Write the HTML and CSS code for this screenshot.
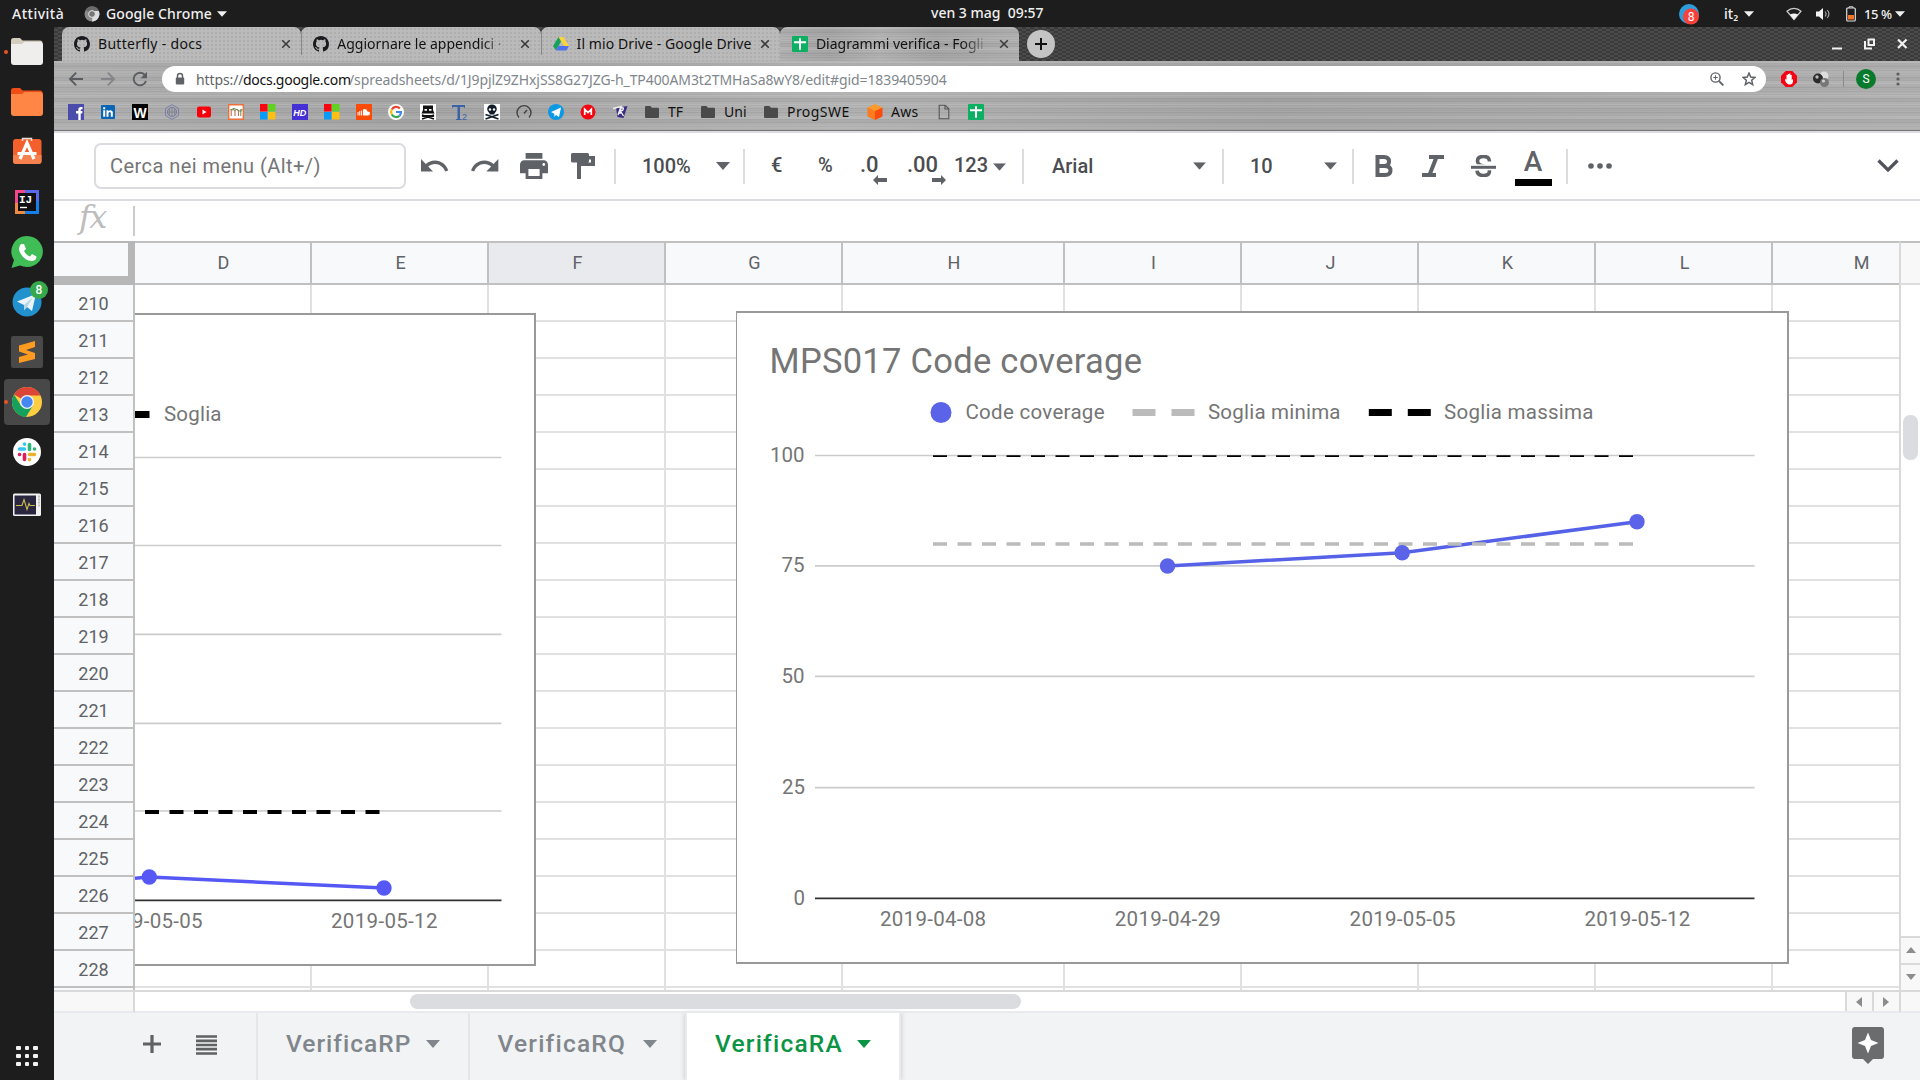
FILE: index.html
```html
<!DOCTYPE html>
<html lang="it">
<head>
<meta charset="utf-8">
<title>Diagrammi verifica - Fogli Google</title>
<link rel="stylesheet" href="styles.css">
</head>
<body>
<svg class="defs" width="0" height="0" aria-hidden="true">
  <defs>
    <symbol id="github" viewBox="0 0 16 16"><path fill="#1b1b1f" d="M8 0C3.58 0 0 3.58 0 8c0 3.54 2.29 6.53 5.47 7.59.4.07.55-.17.55-.38v-1.49c-2.01.37-2.53-.49-2.69-.94-.09-.23-.48-.94-.82-1.13-.28-.15-.68-.52-.01-.53.63-.01 1.08.58 1.23.82.72 1.21 1.87.87 2.33.66.07-.52.28-.87.51-1.07-1.78-.2-3.64-.89-3.64-3.95 0-.87.31-1.59.82-2.15-.08-.2-.36-1.02.08-2.12 0 0 .67-.21 2.2.82a7.6 7.6 0 0 1 4 0c1.53-1.04 2.2-.82 2.2-.82.44 1.1.16 1.92.08 2.12.51.56.82 1.27.82 2.15 0 3.07-1.87 3.75-3.65 3.95.29.25.54.73.54 1.48v2.2c0 .21.15.46.55.38A8 8 0 0 0 16 8c0-4.42-3.58-8-8-8z"/></symbol>
    <symbol id="cross" viewBox="0 0 10 10"><path d="M1.2 1.2l7.6 7.6M8.8 1.2L1.2 8.8" stroke="#3c3c3c" stroke-width="1.6"/></symbol>
    <symbol id="sheets" viewBox="0 0 16 16"><rect width="16" height="16" rx="1" fill="#0db062"/><path d="M2 6.2h12M8 2.2v11.6" stroke="#fff" stroke-width="2"/></symbol>
    <symbol id="folder" viewBox="0 0 16 16"><path fill="#4a4a4a" d="M1 3.4c0-.8.5-1.4 1.3-1.4h4l1.7 1.8h5.7c.8 0 1.3.5 1.3 1.3v7.6c0 .8-.5 1.3-1.3 1.3H2.3C1.500 14 1 13.500 1 12.700z"/></symbol>
    <symbol id="caret" viewBox="0 0 14 8"><path d="M0 0h14L7 8z" fill="currentColor"/></symbol>
    <symbol id="windows" viewBox="0 0 16 16"><path fill="#f8060f" d="M0 0h7.500v7.500H0z"/><path fill="#5fd222" d="M8 0h7.500v7.500H8z"/><path fill="#0a9bf5" d="M0 8h7.500v7.500H0z"/><path fill="#fdbf11" d="M8 8h7.500v7.500H8z"/></symbol>
  </defs>
</svg>

<header class="system-bar">
  <span class="activities">Attività</span>
  <svg class="app-icon" width="16" height="16" viewBox="0 0 16 16"><circle cx="8" cy="8" r="7.500" fill="#8b8b8b"/><path d="M8 8L1.500 4A7.500 7.500 0 0 1 15 5z" fill="#6b6b6b"/><path d="M8 15.500A7.500 7.500 0 0 0 14.800 5H9z" fill="#dedede"/><circle cx="8" cy="8" r="3.400" fill="#777" stroke="#e5e5e5"/></svg>
  <span class="app-name">Google Chrome</span>
  <svg class="sys-caret" width="10" height="6"><use href="#caret"/></svg>
  <span class="clock">ven 3 mag&nbsp; 09:57</span>
  <div class="tray">
    <svg width="22" height="22" viewBox="0 0 22 22"><circle cx="11" cy="11" r="10" fill="#2d9edb"/><circle cx="13" cy="13.500" r="8" fill="#f6423b"/><text x="13" y="18" text-anchor="middle" class="tray-count">8</text></svg>
    <span class="lang">it₂</span>
    <svg class="sys-caret" width="10" height="6"><use href="#caret"/></svg>
    <svg class="wifi" width="16" height="14" viewBox="0 0 16 14"><path d="M1 4.200C5 .3 11 .3 15 4.200L8 12.500z" fill="none" stroke="#ccc" stroke-width="1.200"/><path d="M4 7.500c2.500-1.500 5.500-1.500 8 0L8 12.700z" fill="#f2f2f2"/></svg>
    <svg class="volume" width="16" height="14" viewBox="0 0 16 14"><path d="M1 4.500h3L8 1v12L4 9.500H1z" fill="#f2f2f2"/><path d="M10 4.500c1.300 1.500 1.300 3.500 0 5M12.200 3c2.200 2.500 2.200 5.500 0 8" fill="none" stroke="#aaa" stroke-width="1.100"/></svg>
    <svg class="battery" width="10" height="16" viewBox="0 0 10 16"><path d="M3 2V.8h4V2" fill="none" stroke="#ddd"/><rect x=".7" y="2" width="8.600" height="13" rx="1" fill="none" stroke="#ddd" stroke-width="1.200"/><path d="M2 9h6v4.500H2z" fill="#f37329"/></svg>
    <span class="percent">15 %</span>
    <svg class="sys-caret" width="10" height="6"><use href="#caret"/></svg>
  </div>
</header>

<div class="desktop">
<nav class="dock">
  <div class="dock-item running"><svg width="32" height="32" viewBox="0 0 32 32"><path d="M0 4.500Q0 2 2.500 2H9l2.500 2.500H29Q31.500 4.500 31.500 7v5H0z" fill="#d3cdc0"/><path d="M0 8h11l2.500-2H29q3 0 3 3v17q0 3-3 3H3q-3 0-3-3z" fill="#efeeec"/></svg></div>
  <div class="dock-item"><svg width="32" height="32" viewBox="0 0 32 32"><path d="M0 4.500Q0 2 2.500 2H9l2.500 2.500H29Q31.500 4.500 31.500 7v5H0z" fill="#f04e16"/><path d="M0 8h11l2.500-2H29q3 0 3 3v18q0 3-3 3H3q-3 0-3-3z" fill="#ff8644"/></svg></div>
  <div class="dock-item store"><svg width="32" height="32" viewBox="0 0 32 32"><rect x="2" y="4" width="28.500" height="25" rx="3" fill="#f4602c"/><path d="M2 20h28.500v6q0 3-3 3H5q-3 0-3-3z" fill="#f5824e"/><path d="M11.500 6V3.500h9V6" fill="none" stroke="#eedfd8" stroke-width="1.500"/><path d="M9 24l7-16 7 16M6.500 18.500h19" fill="none" stroke="#fff" stroke-width="3.200"/></svg></div>
  <div class="dock-item"><svg width="32" height="32" viewBox="0 0 32 32"><path d="M4 4h12v24H4z" fill="#f3478a"/><path d="M14 4h14v12H14z" fill="#576bea"/><path d="M4 17h10v11H4z" fill="#ef8a45"/><path d="M14 15h14v13H14z" fill="#1680ea"/><path d="M7 7h18v18H7z" fill="#101014"/><text x="8" y="16.500" class="ij">IJ</text><path d="M9 21.500h7" stroke="#fff" stroke-width="1.400"/></svg></div>
  <div class="dock-item"><svg width="32" height="32" viewBox="0 0 32 32"><path d="M16 0a16 15.500 0 1 1-7 29.500L.5 32l2.500-8A15.500 15.500 0 0 1 16 0z" fill="#40bd56"/><path d="M10 8l3 0 2 5-2 2q2 4 6 5.500l2-2.500 4.500 2.500q0 4-4.500 4.500C14 25 8.500 18 8 13q0-3 2-5z" fill="#fff"/></svg></div>
  <div class="dock-item"><svg width="32" height="32" viewBox="0 0 32 32"><circle cx="16" cy="16" r="14.500" fill="#2491cf"/><path d="M6 15.500L25 8l-4 17-5-4-3 3v-5z" fill="#eaf5fb"/><path d="M13 19l9-8-6 10-3 3z" fill="#b8d5e5"/></svg><span class="dock-badge">8</span></div>
  <div class="dock-item"><svg width="32" height="32" viewBox="0 0 32 32"><rect width="32" height="32" rx="2" fill="#494949"/><path d="M8 9.500L24 5v6l-9 3 9 3v6L8 27v-6l9-2.500-9-3z" fill="#ff9b20"/></svg></div>
  <div class="dock-item active running"><svg width="32" height="32" viewBox="0 0 32 32"><circle cx="16" cy="16" r="15" fill="#ffcd41"/><path d="M16 16L3 8.500A15 15 0 0 1 29.500 9.500H16z" fill="#db4437"/><path d="M3 8.500A15 15 0 0 0 15 31l7-11.500-12 0z" fill="#15a05d"/><circle cx="16" cy="16" r="7" fill="#f3f3f3"/><circle cx="16" cy="16" r="5.700" fill="#4687f4"/></svg></div>
  <div class="dock-item"><svg width="32" height="32" viewBox="0 0 32 32"><circle cx="16" cy="16" r="14" fill="#fff"/><g stroke-width="3.600" stroke-linecap="round" fill="none"><path d="M8.500 13h5M13.500 8v.2" stroke="#36c5f0"/><path d="M18.500 8.500v5M23.500 13h.1" stroke="#2eb67d"/><path d="M18.500 18.500h5M18.500 23.500v.1" stroke="#ecb22e"/><path d="M13.500 18.500v5M8.500 18.500h.1" stroke="#e01e5a"/></g></svg></div>
  <div class="dock-item monitor"><svg width="32" height="32" viewBox="0 0 32 32"><rect x="2" y="4.500" width="28" height="22.500" rx="1.500" fill="#f2f2f2"/><path d="M3.500 6.500h21.500v19H3.500z" fill="#2a2640"/><path d="M5 16.500h6l2-6 3 10 2-6 1 2h5" fill="none" stroke="#c9bd48" stroke-width="1.100"/><path d="M28 6.500v12" stroke="#8d8d8d" stroke-dasharray="2 1"/></svg></div>
  <div class="app-grid"><i></i><i></i><i></i><i></i><i></i><i></i><i></i><i></i><i></i></div>
</nav>

<main class="browser">
  <div class="tab-strip">
    <div class="tab first"><svg width="16" height="16"><use href="#github"/></svg><span class="t1">Butterfly - docs</span><svg class="close" width="10" height="10"><use href="#cross"/></svg></div>
    <div class="tab"><svg width="16" height="16"><use href="#github"/></svg><span class="t2 fade">Aggiornare le appendici ·</span><svg class="close" width="10" height="10"><use href="#cross"/></svg></div>
    <div class="tab"><svg width="16" height="16" viewBox="0 0 16 16"><path d="M5.500 1h5L16 10h-5z" fill="#fdd33b"/><path d="M5.500 1L8 5.500 3 14.500 0 10z" fill="#17a15f"/><path d="M5.500 10H16l-2.700 4.500H3z" fill="#5070ee"/></svg><span class="t3">Il mio Drive - Google Drive</span><svg class="close" width="10" height="10"><use href="#cross"/></svg></div>
    <div class="tab current"><svg width="16" height="16"><use href="#sheets"/></svg><span class="t4 fade">Diagrammi verifica - Fogli</span><svg class="close" width="10" height="10"><use href="#cross"/></svg></div>
    <button class="new-tab" aria-label="Nuova scheda"></button>
    <svg class="window-controls" width="76" height="12" viewBox="0 0 76 12"><path d="M0 10.500h10" stroke="#f2f2f2" stroke-width="2"/><path d="M36.500 1.500h5.500v5.500h-5.500z" fill="none" stroke="#f2f2f2" stroke-width="2"/><path d="M33 3v7.500h7" fill="none" stroke="#f2f2f2" stroke-width="2"/><path d="M66 1.500l8.500 8.500M74.500 1.500L66 10" stroke="#f2f2f2" stroke-width="2.200"/></svg>
  </div>

  <div class="metal">
    <div class="nav-bar">
      <svg class="nav-icon" width="16" height="16" viewBox="0 0 16 16"><path d="M15 8H2M8.200 1.700L2 8l6.200 6.300" fill="none" stroke="#5a5c61" stroke-width="1.900"/></svg>
      <svg class="nav-icon" width="16" height="16" viewBox="0 0 16 16"><path d="M1 8h13M7.800 1.700L14 8l-6.200 6.300" fill="none" stroke="#858589" stroke-width="1.900"/></svg>
      <svg class="nav-icon" width="16" height="16" viewBox="0 0 16 16"><path d="M13 4.200A6.300 6.300 0 1 0 14 10" fill="none" stroke="#5a5c61" stroke-width="1.900"/><path d="M15 .8v6.400H8.600z" fill="#5a5c61"/></svg>
      <div class="omnibox">
        <svg class="lock" width="10" height="14" viewBox="0 0 10 14"><path d="M2.500 6V4a2.500 2.500 0 0 1 5 0v2" fill="none" stroke="#5f6368" stroke-width="1.500"/><rect x=".8" y="5.500" width="8.400" height="7" rx="1" fill="#5f6368"/></svg>
        <span class="url"><span class="scheme">https://</span><span class="host">docs.google.com</span><span class="path">/spreadsheets/d/1J9pjlZ9ZHxjSS8G27JZG-h_TP400AM3t2TMHaSa8wY8/edit#gid=1839405904</span></span>
        <svg class="zoom" width="14" height="14" viewBox="0 0 14 14"><circle cx="5.500" cy="5.500" r="4.600" fill="none" stroke="#5f6368" stroke-width="1.400"/><path d="M3.300 5.500h4.400M5.500 3.300v4.400" stroke="#5f6368"/><path d="M8.800 8.800l4.600 4.600" stroke="#5f6368" stroke-width="1.900"/></svg>
        <svg class="star" width="14" height="14" viewBox="0 0 14 14"><path d="M7 1l1.700 4 4.300.4-3.300 2.900 1 4.300L7 10.300l-3.700 2.300 1-4.300L1 5.400 5.300 5z" fill="none" stroke="#5f6368" stroke-width="1.500"/></svg>
      </div>
      <svg class="ext1" width="16" height="16" viewBox="0 0 16 16"><path d="M4.700 0h6.600L16 4.700v6.600L11.300 16H4.700L0 11.300V4.700z" fill="#f50514"/><path d="M4.200 7.500l1.300 1.200V4h1.300V3h1.300V2.500h1.300V4h1.300v5l1.300-1v3q-.5 2.500-3 2.500H7.500Q5.500 13 4.200 10z" fill="#fff"/></svg>
      <svg class="ext2" width="16" height="16" viewBox="0 0 16 16"><circle cx="11" cy="5" r="4.500" fill="#ddd"/><circle cx="5" cy="7.500" r="5" fill="#2b2b2b"/><circle cx="11.500" cy="11.500" r="4.500" fill="#777"/><circle cx="4" cy="6" r="1.700" fill="#b9b9b9"/><circle cx="10.500" cy="10" r="1.600" fill="#d0d0d0"/></svg>
      <i class="nav-sep"></i>
      <span class="avatar">S</span>
      <svg class="kebab" width="4" height="14" viewBox="0 0 4 14"><g fill="#5a5c61"><circle cx="2" cy="2" r="1.600"/><circle cx="2" cy="7" r="1.600"/><circle cx="2" cy="12" r="1.600"/></g></svg>
    </div>
    <div class="bookmarks">
      <svg viewBox="0 0 16 16"><path fill="#4a4bab" d="M0 0h16v16H0z"/><path d="M10.300 16V9.500H8V7h2.300V5.500Q10.300 3 13 3h1.500v2.200H13.500q-.8 0-.8.800v1h1.800l-.3 2.500h-1.500V16z" fill="#fff"/></svg>
      <svg viewBox="0 0 16 16"><rect x="1" y="1" width="14" height="14" rx="1" fill="#0a66b4"/><path d="M3.200 6.300h2v6.500h-2zM3.200 3.200h2v2h-2zM6.500 6.300h1.900v1q2.500-2.400 4.400.5v5h-2V9q-1-2-2.300 0v3.800h-2z" fill="#fff"/></svg>
      <svg viewBox="0 0 16 16"><path d="M0 0h16v16H0z"/><text x="8" y="13.500" text-anchor="middle" class="bm-w">W</text></svg>
      <svg viewBox="0 0 16 16"><path d="M8 .7l6.500 3.700v7.200L8 15.300l-6.500-3.700V4.400z" fill="none" stroke="#7a7fae"/><circle cx="8" cy="8" r="4.500" fill="none" stroke="#777b96"/><path d="M8 3v10M5.500 5v6M10.500 5v6M3.500 8h9" stroke="#777b96" stroke-width=".7"/></svg>
      <svg viewBox="0 0 16 16"><rect x="1" y="2.500" width="14" height="11" rx="2" fill="#f80009"/><path d="M6.500 5.500v5L10.500 8z" fill="#fff"/></svg>
      <svg viewBox="0 0 16 16"><path d="M.7.700h14.600v14.600H.700z" fill="#fff" stroke="#ed6f3b" stroke-width="1.400"/><path d="M3.200 12V7Q5.500 4 7 7v5M7 7q2-3 3.500 0v5" fill="none" stroke="#b9714f" stroke-width="1.100"/><path d="M2 6q4-3 8 0t4-1M12.800 5v7" fill="none" stroke="#5d8c54"/></svg>
      <svg viewBox="0 0 16 16"><use href="#windows"/></svg>
      <svg viewBox="0 0 16 16"><path fill="#4530d5" d="M0 0h16v16H0z"/><text x="7.800" y="11.500" text-anchor="middle" class="bm-hd">HD</text></svg>
      <svg viewBox="0 0 16 16"><use href="#windows"/></svg>
      <svg viewBox="0 0 16 16"><path fill="#fa4b08" d="M0 0h16v16H0z"/><path d="M2 8v3.500M3.800 7v4.500M5.600 6.500v5" stroke="#fff"/><path d="M7 5.500q3.500-1.500 4.500 2 2.500-.2 2.500 2 0 2-2 2H7z" fill="#fff"/></svg>
      <svg viewBox="0 0 16 16"><circle cx="8" cy="8" r="8" fill="#fff"/><g fill="none" stroke-width="2.200"><path d="M11.800 4.400A5 5 0 0 0 3.800 5.500" stroke="#ea4335"/><path d="M3.800 5.500a5 5 0 0 0 0 5" stroke="#fbbc05"/><path d="M3.800 10.500a5 5 0 0 0 7.800 1.200" stroke="#34a853"/><path d="M11.600 11.700A5 5 0 0 0 13 8H8" stroke="#4285f4"/></g></svg>
      <svg viewBox="0 0 16 16"><path fill="#fff" d="M0 0h16v16H0z"/><path d="M3 1.500h10V6l1.500 3.500h-13L3 6z" fill="#111"/><path d="M2 11l12 4M14 11L2 15" stroke="#111" stroke-width="1.500"/><path d="M2 12h12" stroke="#111" stroke-width="2"/><path d="M4.500 5h2.500v1.800H4.500zM9 5h2.500v1.800H9z" fill="#fff"/></svg>
      <svg viewBox="0 0 16 16"><path d="M0 1h13v3.500l-1-1.500H8v12h1.500v1h-5.500v-1H5.500V3H1L0 4.500z" fill="#3a62a5"/><text x="10" y="16" class="bm-t2">2</text></svg>
      <svg viewBox="0 0 16 16"><path fill="#fff" d="M0 0h16v16H0z"/><ellipse cx="8" cy="5" rx="4.800" ry="4.500" fill="#111c28"/><path d="M5.500 7h5v3.500h-5z" fill="#111c28"/><path d="M1.500 10.500l13 4.500M14.500 10.500l-13 4.500" stroke="#111c28" stroke-width="1.500"/><circle cx="6" cy="5.500" r="1.200" fill="#fff"/><circle cx="10" cy="5.500" r="1.200" fill="#fff"/></svg>
      <svg viewBox="0 0 16 16"><path d="M3 13.500A7 7 0 1 1 13 13.500" fill="none" stroke="#424242" stroke-width="1.400"/><path d="M8 9.500l3-3.500" stroke="#424242" stroke-width="1.500"/></svg>
      <svg viewBox="0 0 16 16"><circle cx="8" cy="8" r="8" fill="#0b98e4"/><path d="M3 8l10-4.500-2 9.500-3-2-1.700 1.700v-3z" fill="#fff"/></svg>
      <svg viewBox="0 0 16 16"><circle cx="8" cy="8" r="7.500" fill="#f2060f"/><path d="M4.700 11V5.300L8 8.500l3.300-3.200V11" fill="none" stroke="#fff" stroke-width="1.700"/></svg>
      <svg viewBox="0 0 16 16"><path d="M4 4l11.500-2-4 12-6-1z" fill="#3b2b83"/><path d="M1 4.500l8-2L6 11M8 10l1-6q4-1 1.500 2.500L8.500 7l3 5" fill="none" stroke="#eee" stroke-width="1.400"/></svg>
      <span class="bookmark tf"><svg viewBox="0 0 16 16"><use href="#folder"/></svg>TF</span>
      <span class="bookmark uni"><svg viewBox="0 0 16 16"><use href="#folder"/></svg>Uni</span>
      <span class="bookmark prog"><svg viewBox="0 0 16 16"><use href="#folder"/></svg>ProgSWE</span>
      <span class="bookmark aws"><svg viewBox="0 0 16 16"><path d="M8 0l7.500 3.500L8 8 .5 3.500z" fill="#fb9a2c"/><path d="M.5 3.500L8 7v9L.5 12.500z" fill="#fb7b1e"/><path d="M15.500 3.500L8 7v9l7.500-3.500z" fill="#fb4b0d"/></svg>Aws</span>
      <svg viewBox="0 0 16 16"><path d="M3.200 1.200h6l3.600 3.600v10H3.200zM9 1.200V5h3.800" fill="none" stroke="#555" stroke-width="1.100"/></svg>
      <svg viewBox="0 0 16 16"><use href="#sheets"/></svg>
    </div>
  </div>

  <div class="toolbar">
    <div class="search">Cerca nei menu (Alt+/)</div>
    <div class="tools history">
      <svg width="28" height="14" viewBox="2 7 21 10" preserveAspectRatio="none"><path fill="#5f6368" d="M12.500 8c-2.650 0-5.050.99-6.900 2.600L2 7v9h9l-3.620-3.620c1.390-1.160 3.160-1.880 5.120-1.880 3.540 0 6.550 2.310 7.600 5.500l2.370-.78C21.080 11.030 17.150 8 12.500 8z"/></svg>
      <svg width="28" height="14" viewBox="1.500 7 21 10" preserveAspectRatio="none"><path fill="#5f6368" d="M18.400 10.600C16.550 8.990 14.150 8 11.500 8c-4.650 0-8.580 3.030-9.960 7.220L3.900 16c1.050-3.190 4.050-5.500 7.600-5.500 1.950 0 3.730.72 5.120 1.880L13 16h9V7l-3.600 3.600z"/></svg>
      <svg class="print" width="28" height="26" viewBox="2 3 20 18" preserveAspectRatio="none"><path fill="#5f6368" d="M19 8H5c-1.660 0-3 1.340-3 3v6h4v4h12v-4h4v-6c0-1.660-1.340-3-3-3zm-3 11H8v-5h8v5zm3-7c-.55 0-1-.45-1-1s.45-1 1-1 1 .45 1 1-.45 1-1 1zm-1-9H6v4h12V3z"/></svg>
      <svg width="24" height="26" viewBox="0 0 24 26"><path fill="#5f6368" d="M1.500 0h15q1.500 0 1.500 1.500V3h6v10H10v13H6V9.500h14V6.500H18V8q0 1.500-1.500 1.500h-15Q0 9.500 0 8V1.500Q0 0 1.500 0z"/></svg>
    </div>
    <div class="tools zoom-level"><span>100%</span><svg class="drop" width="14" height="8"><use href="#caret"/></svg></div>
    <div class="tools number">
      <span class="eur">€</span><span class="pct">%</span>
      <span class="dec dec1">.0<svg width="14" height="10" viewBox="0 0 14 10"><path d="M0 5l5-5v3h9v4H5v3z" fill="#5f6368"/></svg></span>
      <span class="dec dec2">.00<svg width="14" height="10" viewBox="0 0 14 10"><path d="M14 5L9 0v3H0v4h9v3z" fill="#5f6368"/></svg></span>
      <span class="fmt">123</span><svg class="drop" width="13" height="8" viewBox="0 0 14 8"><use href="#caret"/></svg>
    </div>
    <div class="tools family"><span>Arial</span><svg class="drop" width="13" height="8" viewBox="0 0 14 8"><use href="#caret"/></svg></div>
    <div class="tools size"><span>10</span><svg class="drop" width="13" height="8" viewBox="0 0 14 8"><use href="#caret"/></svg></div>
    <div class="tools style">
      <svg width="18" height="22" viewBox="0 0 18 22"><path d="M2.500 2h6.500q5 0 5 4.500T9 11H2.500zM2.500 11H10q5.500 0 5.500 4.500T10 20H2.500z" fill="none" stroke="#5f6368" stroke-width="4"/></svg>
      <svg width="22" height="22" viewBox="0 0 22 22"><path d="M7 2h15M0 20h14M14.500 2L7.500 20" fill="none" stroke="#5f6368" stroke-width="4"/></svg>
      <svg width="25" height="22" viewBox="0 0 25 22"><path d="M18.500 6.500q0-5-6-5t-6 4.500q0 4 6 5t6 5q0 4.500-6 4.500t-6.500-5" fill="none" stroke="#5f6368" stroke-width="3.600"/><path d="M0 9.300h25v6H0z" fill="#fff"/><path d="M0 12.300h25" stroke="#5f6368" stroke-width="3"/></svg>
      <span class="text-color">A</span>
    </div>
    <div class="tools more">
      <svg width="24" height="8" viewBox="0 0 24 8"><g fill="#5f6368"><circle cx="3" cy="4" r="2.800"/><circle cx="12" cy="4" r="2.800"/><circle cx="21" cy="4" r="2.800"/></g></svg>
      <svg width="22" height="14" viewBox="0 0 22 14"><path d="M1.500 1.500L11 11l9.500-9.500" fill="none" stroke="#50545a" stroke-width="3.200"/></svg>
    </div>
  </div>

  <div class="formula"><span class="fx">fx</span><i></i></div>

  <div class="sheet">
    <div class="corner"></div>
    <div class="col-heads"><span>D</span><span>E</span><span class="selected">F</span><span>G</span><span class="wide">H</span><span>I</span><span>J</span><span>K</span><span>L</span><span>M</span></div>
    <div class="scroll-head"></div>
    <div class="row-heads"><span>210</span><span>211</span><span>212</span><span>213</span><span>214</span><span>215</span><span>216</span><span>217</span><span>218</span><span>219</span><span>220</span><span>221</span><span>222</span><span>223</span><span>224</span><span>225</span><span>226</span><span>227</span><span>228</span></div>
    <div class="cells">
      <div class="col-lines"><i></i><i></i><i></i><i></i><i class="wide"></i><i></i><i></i><i></i><i></i></div>
      <div class="chart chart-left">
        <svg width="399" height="649" viewBox="135 315 399 649">
          <g stroke="#ccc" stroke-width="1.700"><path d="M135 457.500h366.500M135 545.500h366.500M135 634.300h366.500M135 723.300h366.500M135 811h366.500"/></g>
          <path d="M135 900.300h366.500" stroke="#333" stroke-width="1.800"/>
          <path d="M135 414.500h14.500" stroke="#000" stroke-width="7"/>
          <path d="M145 812h236" stroke="#000" stroke-width="4" stroke-dasharray="14 10.500"/>
          <path d="M135 878.300L149.300 877 384 888" fill="none" stroke="#5558f5" stroke-width="3.500"/>
          <g fill="#5558f5"><circle cx="149.300" cy="877" r="7.700"/><circle cx="384" cy="888" r="7.700"/></g>
          <g class="chart-text"><text x="164" y="421" textLength="57.500">Soglia</text><text x="96.500" y="927.500" textLength="106">2019-05-05</text><text x="331" y="927.500" textLength="106.500">2019-05-12</text></g>
        </svg>
      </div>
      <div class="chart chart-right">
        <svg width="1050" height="649" viewBox="737 313 1050 649">
          <text class="chart-title" x="769.500" y="372.700" textLength="372.500">MPS017 Code coverage</text>
          <circle cx="941" cy="412.500" r="10.500" fill="#5b63e8"/>
          <path d="M1132.500 412.500h62.500" stroke="#bbb" stroke-width="7" stroke-dasharray="23 16"/>
          <path d="M1368.800 412.500h62" stroke="#000" stroke-width="7" stroke-dasharray="23 16"/>
          <g stroke="#ccc" stroke-width="1.700"><path d="M815 455.500h939.500M815 565.800h939.500M815 676.300h939.500M815 787.700h939.500"/></g>
          <path d="M815 898.300h939.500" stroke="#333" stroke-width="1.800"/>
          <path d="M1167.500 566L1402.200 552.700 1637 521.700" fill="none" stroke="#5562e8" stroke-width="3.500"/>
          <path d="M933 544h702" stroke="#bbb" stroke-width="3.600" stroke-dasharray="14 10.500"/>
          <path d="M933 456.200h702" stroke="#000" stroke-width="1.700" stroke-dasharray="14 10.500"/>
          <g fill="#5b63e8"><circle cx="1167.500" cy="566" r="7.700"/><circle cx="1402.200" cy="552.700" r="7.700"/><circle cx="1637" cy="521.700" r="7.700"/></g>
          <g class="chart-text">
            <text x="965.500" y="419" textLength="139">Code coverage</text><text x="1208" y="419" textLength="132.500">Soglia minima</text><text x="1444" y="419" textLength="149.500">Soglia massima</text>
            <g text-anchor="end"><text x="804.500" y="462">100</text><text x="804.500" y="572">75</text><text x="804.500" y="682.500">50</text><text x="805" y="794">25</text><text x="805" y="905">0</text></g>
            <text x="880" y="925.700" textLength="106">2019-04-08</text><text x="1114.800" y="925.700" textLength="106">2019-04-29</text><text x="1349.600" y="925.700" textLength="106">2019-05-05</text><text x="1584.400" y="925.700" textLength="106">2019-05-12</text>
          </g>
        </svg>
      </div>
    </div>
    <div class="v-scroll"><i class="thumb"></i><span><b class="up"></b></span><span><b class="down"></b></span></div>
    <div class="h-start"></div>
    <div class="h-scroll"><i class="thumb"></i><span><b class="left"></b></span><span><b class="right"></b></span></div>
    <div class="h-end"></div>
  </div>

  <footer class="sheet-tabs">
    <div class="sheet-menu">
      <svg width="18" height="18" viewBox="0 0 18 18"><path d="M0 9h18M9 0v18" stroke="#616161" stroke-width="3.200"/></svg>
      <svg width="21" height="20" viewBox="0 0 21 20"><path d="M0 1.500h21M0 5.800h21M0 10h21M0 14.200h21M0 18.500h21" stroke="#616161" stroke-width="2.700"/></svg>
    </div>
    <div class="sheet-tab rp"><span>VerificaRP</span><svg width="14" height="8"><use href="#caret"/></svg></div>
    <div class="sheet-tab rq"><span>VerificaRQ</span><svg width="14" height="8"><use href="#caret"/></svg></div>
    <div class="sheet-tab ra"><span>VerificaRA</span><svg width="14" height="8"><use href="#caret"/></svg></div>
    <svg class="explore" width="32" height="37" viewBox="0 0 32 37"><path d="M3 0h26q3 0 3 3v26q0 3-3 3h-8l-5 5-5-5H3q-3 0-3-3V3q0-3 3-3z" fill="#6b6c6e"/><path d="M16 5.500l3 7.500 7.500 3-7.500 3-3 7.500-3-7.500-7.500-3 7.500-3z" fill="#fff"/></svg>
  </footer>
</main>
</div>
</body>
</html>
```

FILE: styles.css
```css
* { box-sizing: border-box; }
body { margin: 0; width: 1920px; height: 1080px; overflow: hidden; font-family: "Roboto", "Liberation Sans", sans-serif; background: #fff; }
svg { display: block; flex: none; }
.defs { position: absolute; }
span { white-space: nowrap; }

/* System bar */
.system-bar { position: relative; height: 27px; background: #1d1d1d; color: #f0f0f0; display: flex; align-items: center; padding-left: 12px; font: 500 14px/26px "Noto Sans", sans-serif; }
.activities { width: 72px; letter-spacing: .5px; }
.app-icon { margin-right: 6px; }
.app-name { width: 105px; margin-right: 6px; letter-spacing: .1px; }
.sys-caret { color: #f0f0f0; }
.clock { position: absolute; left: 931px; top: 0; }
.tray { margin-left: auto; display: flex; align-items: center; padding-right: 15px; }
.tray-count { font: 12px "Roboto", sans-serif; fill: #fff; }
.lang { width: 19px; margin-left: 24px; }
.wifi { margin-left: 32px; }
.volume { margin-left: 13px; }
.battery { margin-left: 15px; }
.percent { width: 31px; margin-left: 8px; font-size: 13px; letter-spacing: -.4px; }
.tray .lang { margin-right: 1px; }

/* Dock */
.desktop { display: flex; height: 1053px; }
.dock { width: 54px; background: #1d1d1d; display: flex; flex-direction: column; }
.dock-item { position: relative; height: 50px; display: flex; align-items: center; justify-content: center; margin: 0 4px; }
.dock-item.active { height: 46px; margin: 2px 4px; background: #484848; border-radius: 4px; }
.dock-item.running::before { content: ""; position: absolute; left: 0; top: 50%; width: 4px; height: 4px; margin-top: -2px; border-radius: 2px; background: #e95420; }
.dock-item.store { padding-bottom: 2px; }
.dock-item.monitor { padding-top: 5px; }
.dock-badge { position: absolute; left: 26px; top: 4px; width: 18px; height: 18px; border-radius: 9px; background: #36a94c; color: #fff; font: 500 12px/18px "Roboto", sans-serif; text-align: center; }
.ij { font: bold 11px "Liberation Mono", monospace; fill: #fff; }
.app-grid { margin-top: auto; margin-bottom: 14px; align-self: center; display: grid; grid-template-columns: repeat(3, 5px); gap: 3.500px; }
.app-grid i { width: 4.500px; height: 4.500px; border-radius: 1px; background: #f2f2f2; }

/* Browser chrome */
.browser { width: 1866px; display: flex; flex-direction: column; }
.tab-strip { height: 34px; display: flex; padding-left: 8px; background-color: #414141; background-image: conic-gradient(#4b4b4b 25%, #3a3a3a 0 50%, #4b4b4b 0 75%, #3a3a3a 0); background-size: 8px 4px; }
.tab { position: relative; width: 239.300px; display: flex; align-items: center; padding-left: 12px; border-radius: 7px 7px 0 0; background-color: #bababa; background-image: radial-gradient(#aeaeae .7px, transparent 1px); background-size: 4px 4px; font: 14px/34px "Noto Sans", sans-serif; color: #111; }
.tab + .tab::before { content: ""; position: absolute; left: 0; top: 6px; width: 1px; height: 22px; background: #888; }
.tab.current::before { display: none; }
.tab span { margin-left: 8px; width: 179px; }
.tab .t1 { letter-spacing: .3px; }
.tab .t3 { letter-spacing: .08px; }
.tab .close { margin-left: 4px; }
.tab .fade { -webkit-mask-image: linear-gradient(90deg, #000 145px, transparent 174px); mask-image: linear-gradient(90deg, #000 145px, transparent 174px); }
.tab.current, .metal { background-color: #ababab; background-image: repeating-linear-gradient(180deg, #fff0 0 1px, #ffffff12 1px 2px, #0000000a 2px 3px, #fff0 3px 5px, #0000000a 5px 6px, #ffffff0d 6px 7px), repeating-linear-gradient(180deg, #ffffff10 0 2px, #00000008 4px 7px, #ffffff10 11px), linear-gradient(90deg, #ffffff0d, #0000000a 20%, #ffffff14 42%, #0000000a 65%, #ffffff0d); background-size: auto; }
.new-tab { position: relative; width: 28px; height: 28px; margin: 3px 0 0 7.500px; border: 0; padding: 0; border-radius: 14px; background: linear-gradient(#111, #111) center/12px 2px no-repeat, linear-gradient(#111, #111) center/2px 12px no-repeat, #c4c4c4; }
.window-controls { margin: 11px 12px 0 auto; }
.metal { height: 70px; border-bottom: 1px solid #777; }
.nav-bar { height: 35px; display: flex; align-items: center; padding-left: 14px; }
.nav-icon { margin-right: 16px; }
.omnibox { width: 1604px; height: 26px; margin-left: -2px; margin-top: 1px; border-radius: 13px; background: #fff; display: flex; align-items: center; padding: 0 10px 0 13px; }
.url { margin-left: 11px; margin-right: auto; font: 14px/25px "Noto Sans", sans-serif; color: #80868b; display: flex; }
.scheme { color: #5f6368; width: 47px; letter-spacing: -.1px; }
.host { color: #111; width: 106px; letter-spacing: -.28px; }
.path { letter-spacing: -.09px; }
.zoom { margin-right: 18px; }
.ext1 { margin-left: 15px; }
.ext2 { margin-left: 16px; }
.nav-sep { width: 1px; height: 16px; background: #8a8a8a; margin: 0 12px 0 14px; }
.avatar { width: 20px; height: 20px; border-radius: 10px; background: #087a2b; color: #fff; font: 12px/20px "Roboto", sans-serif; text-align: center; }
.kebab { margin-left: 20px; }
.bookmarks { display: flex; align-items: center; gap: 16px; padding-left: 14px; height: 31px; font: 14px/20px "Noto Sans", sans-serif; color: #111; }
.bookmarks svg { width: 16px; height: 16px; }
.bookmark { display: flex; align-items: center; gap: 8px; }
.tf { width: 40px; }
.uni { width: 47px; }
.prog { width: 88px; letter-spacing: .45px; }
.aws { width: 53px; letter-spacing: .3px; }
.bm-w { font: bold 14px "Liberation Sans", sans-serif; fill: #fff; }
.bm-hd { font: italic bold 9px "Liberation Sans", sans-serif; fill: #fff; }
.bm-t2 { font: 9px "Liberation Sans", sans-serif; fill: #3a62a5; }

/* Spreadsheet toolbar */
.toolbar { height: 70px; border-top: 2px solid #dadce0; border-bottom: 2px solid #dadce0; display: flex; padding-left: 40px; color: #4b4d50; font: 500 20px/24px "Roboto", sans-serif; }
.search { width: 312px; height: 46px; margin-top: 10px; border: 2px solid #dadce0; border-radius: 7px; padding: 0 0 0 14px; font-weight: 400; line-height: 43px; letter-spacing: .45px; color: #757575; }
.tools { position: relative; display: flex; align-items: center; height: 66px; padding-bottom: 1px; }
.tools + .tools::before { content: ""; position: absolute; left: 0; top: 16px; width: 2px; height: 35px; background: #dadce0; }
.drop { color: #5f6368; }
.history { width: 208px; padding-left: 15px; gap: 22px; }
.history .print { margin: 0 1px 0 -1px; }
.zoom-level { width: 129px; padding-left: 28px; justify-content: space-between; padding-right: 13.500px; }
.number { width: 279px; }
.number > span { position: absolute; top: 20px; }
.eur { left: 28px; }
.pct { left: 75px; }
.dec { font-weight: 500; font-size: 22px; }
.dec1 { left: 117px; }
.dec2 { left: 164px; }
.dec svg { position: absolute; right: -8px; top: 22px; }
.fmt { left: 211px; }
.number .drop { margin: 3px 0 0 250px; }
.family { width: 200px; padding-left: 30px; justify-content: space-between; padding-right: 16px; }
.size { width: 129.500px; padding-left: 28px; justify-content: space-between; padding-right: 15px; }
.style { width: 214.500px; padding-left: 23px; gap: 29px; }
.style svg + svg + svg { margin-left: -2px; }
.text-color { width: 37px; height: 36px; margin: 4px 0 0 -10px; border-bottom: 7px solid #000; color: #5f6368; font: 500 28px/24px "Roboto", sans-serif; text-align: center; }
.more { flex: 1; padding: 0 21px 0 22px; justify-content: space-between; }

.formula { height: 40px; display: flex; align-items: center; }
.fx { width: 79px; padding-left: 25px; font: italic 32px/30px "DejaVu Serif", serif; letter-spacing: -1.500px; color: #bdbdbd; height: 38px; }
.formula i { width: 2px; height: 30px; background: #ccc; }

/* Grid */
.sheet { display: grid; grid-template-columns: 81px 1764px 21px; grid-template-rows: 44px 705px 23px; height: 772px; color: #5f6368; font-size: 18px; }
.corner { background: #f8f9fa; border: solid #b7b7b7; border-width: 2px 7px 9px 0; }
.col-heads { display: flex; overflow: hidden; border: solid #c0c0c0; border-width: 2px 0; }
.col-heads span { flex: none; width: 177px; padding-left: 2px; border-right: 2px solid #c0c0c0; background: #f8f9fa; line-height: 39px; text-align: center; }
.col-heads .wide, .col-lines .wide { width: 222px; }
.col-heads .selected { background: #e8eaed; }
.scroll-head { background: #f8f8f8; border-top: 2px solid #c0c0c0; border-bottom: 2px solid #ddd; border-left: 2px solid #d9d9d9; }
.row-heads { background: #f8f9fa; border-right: 2px solid #c0c0c0; }
.row-heads span { display: block; height: 37px; border-bottom: 2px solid #c0c0c0; line-height: 37px; text-align: center; }
.cells { position: relative; overflow: hidden; background: repeating-linear-gradient(180deg, #fff 0 35px, #e1e1e1 35px 37px); }
.col-lines { display: flex; height: 100%; }
.col-lines i { flex: none; width: 177px; border-right: 2px solid #e1e1e1; }
.chart { position: absolute; background: #fff; border: 2px solid #999; }
.chart-left { left: 0; top: 28px; border-left: 0; width: 401px; height: 653px; }
.chart-right { left: 601px; top: 26px; border-left-width: 1px; width: 1053px; height: 653px; }
.chart-text { font: 20.500px "Roboto", sans-serif; fill: #757575; }
.chart-title { font: 34.500px "Roboto", sans-serif; fill: #757575; }
.v-scroll { position: relative; border-left: 2px solid #d9d9d9; display: flex; flex-direction: column; justify-content: flex-end; }
.v-scroll .thumb { position: absolute; left: 2px; top: 130px; width: 15px; height: 45px; border-radius: 7px; background: #dadce0; }
.v-scroll span { height: 27px; padding-bottom: 2px; border-top: 2px solid #d9d9d9; background: #f8f8f8; display: grid; place-items: center; }
.sheet b { width: 0; height: 0; border: 5px solid transparent; }
.sheet .up { border-width: 0 5px 6px; border-bottom-color: #8c8c8c; }
.sheet .down { border-width: 6px 5px 0; border-top-color: #8c8c8c; }
.sheet .left { border-width: 5px 6px 5px 0; border-right-color: #8c8c8c; }
.sheet .right { border-width: 5px 0 5px 6px; border-left-color: #8c8c8c; }
.h-start, .h-scroll, .h-end { border-top: 2px solid #d9d9d9; border-bottom: 2px solid #e8eaed; }
.h-start { background: #f8f8f8; border-right: 2px solid #d9d9d9; }
.h-scroll { position: relative; display: flex; justify-content: flex-end; }
.h-scroll .thumb { position: absolute; left: 275px; top: 2px; width: 611px; height: 15px; border-radius: 7.500px; background: #dadce0; }
.h-scroll span { width: 27px; padding-right: 2px; border-left: 2px solid #d9d9d9; background: #f8f8f8; display: grid; place-items: center; }
.h-end { background: #f8f8f8; border-left: 2px solid #d9d9d9; }

/* Sheet tabs */
.sheet-tabs { height: 67px; background: #f1f3f4; display: flex; color: #80868b; font: 500 24.500px/62px "Roboto", sans-serif; letter-spacing: 1px; }
.sheet-menu { width: 202px; display: flex; gap: 35px; padding: 22px 0 0 88.500px; }
.sheet-tab { display: flex; align-items: center; justify-content: space-between; height: 67px; padding: 0 28px 5px; border-left: 2px solid #e4e6e9; }
.rp { width: 211.500px; }
.rq { width: 217.500px; letter-spacing: 1.200px; }
.ra { width: 216px; background: #fff; color: #0b9444; box-shadow: 0 0 5px #0003; border: solid #e8eaed; border-width: 0 2px; letter-spacing: 1.200px; }
.explore { margin: 14px 36px 0 auto; }
```
